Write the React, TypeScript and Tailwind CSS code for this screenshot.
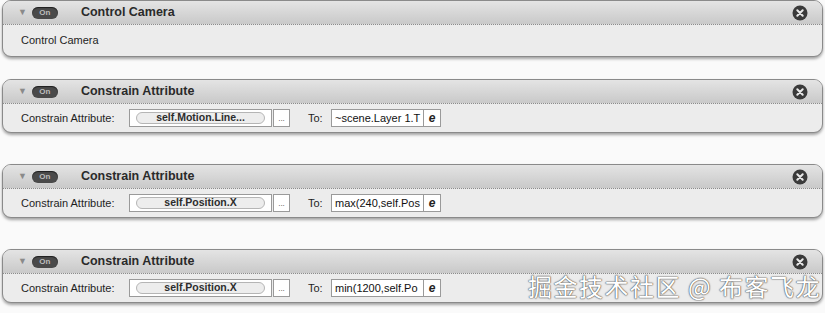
import React from "react";

type Row = {
  title: string;
  source?: string;
  target?: string;
};

const rows: Row[] = [
  { title: "Control Camera" },
  { title: "Constrain Attribute", source: "self.Motion.Line...", target: "~scene.Layer 1.T" },
  { title: "Constrain Attribute", source: "self.Position.X", target: "max(240,self.Pos" },
  { title: "Constrain Attribute", source: "self.Position.X", target: "min(1200,self.Po" },
];

const CloseButton = () => (
  <svg width="16" height="16" viewBox="0 0 16 16">
    <circle cx="8" cy="8" r="7.5" fill="#3a3a3a" />
    <path d="M5.3 5.3 L10.7 10.7 M10.7 5.3 L5.3 10.7" stroke="#e8e8e8" strokeWidth="2" strokeLinecap="round" />
  </svg>
);

const OnToggle = () => (
  <div className="flex h-[12px] w-[26px] items-center justify-center rounded-full bg-[#4a4a4a] text-[8px] font-bold leading-none text-[#bdbdbd] shadow-[inset_0_1px_1px_rgba(0,0,0,0.6)]">
    On
  </div>
);

const BehaviorPanel = ({ row }: { row: Row }) => {
  return (
    <div className="mx-[2px] overflow-hidden rounded-[9px] border border-[#8a8a8a] bg-[#ececec] shadow-[0_2px_3px_rgba(0,0,0,0.35)]">
      <div className="flex h-[24px] items-center border-b border-dotted border-[#8c8c8c] bg-gradient-to-b from-[#e4e4e4] to-[#c9c9c9] pl-[15px] pr-[14px]">
        <span className="text-[9px] leading-none text-[#8a8a8a]">▼</span>
        <div className="ml-[5px]">
          <OnToggle />
        </div>
        <span className="ml-[23px] text-[12.5px] font-bold text-[#2a2a2a]">{row.title}</span>
        <div className="ml-auto">
          <CloseButton />
        </div>
      </div>
      {row.source ? (
        <div className="flex h-[28px] items-center whitespace-nowrap pl-[18px] text-[11px] text-[#1e1e1e]">
          <span className="w-[108px]">Constrain Attribute:</span>
          <div className="flex h-[18px] w-[143px] items-center border border-[#9a9a9a] bg-white px-[6px]">
            <div className="flex h-[12px] w-full items-center justify-center rounded-full border border-[#b5b5b5] bg-[#ededed] text-[10.5px] font-bold text-[#2c2c2c]">
              {row.source}
            </div>
          </div>
          <div className="ml-[1px] flex h-[18px] w-[17px] items-end justify-center border border-[#9a9a9a] bg-white pb-[3px] text-[8px] leading-none text-[#444]">
            ...
          </div>
          <span className="ml-[18px] w-[23px]">To:</span>
          <div className="flex h-[18px] w-[93px] items-center overflow-hidden border border-[#9a9a9a] bg-white pl-[3px] text-[11px] text-[#111]">
            {row.target}
          </div>
          <div className="flex h-[18px] w-[17px] items-center justify-center border border-l-0 border-[#9a9a9a] bg-white text-[12px] font-bold italic leading-none text-[#222]">
            e
          </div>
        </div>
      ) : (
        <div className="flex h-[31px] items-center pl-[18px] text-[11px] text-[#1e1e1e]">Control Camera</div>
      )}
    </div>
  );
};

export default function App() {
  return (
    <div className="relative h-[313px] w-[825px] overflow-hidden bg-[#fafafa] font-['Liberation_Sans',Arial,sans-serif]">
      <div className="flex flex-col">
        <BehaviorPanel row={rows[0]} />
        <div className="mt-[22px]">
          <BehaviorPanel row={rows[1]} />
        </div>
        <div className="mt-[31px]">
          <BehaviorPanel row={rows[2]} />
        </div>
        <div className="mt-[31px]">
          <BehaviorPanel row={rows[3]} />
        </div>
      </div>
      <div className="absolute left-[528px] top-[274px] whitespace-nowrap font-['Noto_Sans_CJK_SC',sans-serif] text-[24px] leading-none tracking-[1.5px] text-white [text-shadow:0_0_1px_#555,0_0_1px_#555,0_0_2px_#777]">
        掘金技术社区 @ 布客飞龙
      </div>
    </div>
  );
}
